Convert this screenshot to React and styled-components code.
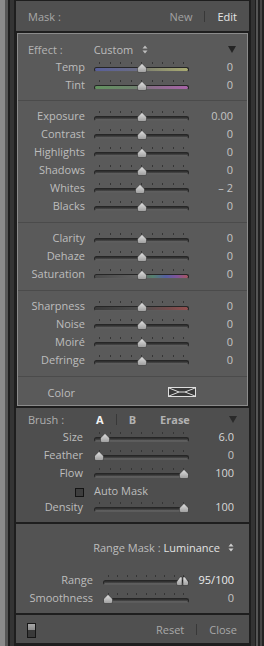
import React from "react";
import styled, { createGlobalStyle } from "styled-components";

const GlobalStyle = createGlobalStyle`
  html, body { margin: 0; padding: 0; background: #1e1e1e; }
  body {
    font-family: "Open Sans", "DejaVu Sans", sans-serif;
    font-size: 11px;
    -webkit-font-smoothing: antialiased;
  }
  * { box-sizing: border-box; }
`;

// track fills: plain groove or colour ramps
const fills = {
  plain: "linear-gradient(#2a2a2a, #3d3d3d 45%, #6c6c6c)",
  temp: "linear-gradient(to right, #585f9a, #6a6c84 45%, #85876f 60%, #a9ab72)",
  tint: "linear-gradient(to right, #62925f, #6f806e 45%, #876e87 60%, #a863a8)",
  sat: "linear-gradient(to right, #4a4a4a, #636363 50%, #55806e 62%, #5560a0 76%, #80549a 88%, #a85660)",
  sharp: "linear-gradient(to right, #3a3a3a, #4e4e4e 50%, #744c4c 80%, #935050)",
};

const Frame = styled.div`
  width: 264px;
  height: 646px;
  display: flex;
  padding: 1px 15px 3px 16px;
  background: #1e1e1e;
  box-shadow: inset 5px 0 #8a8a8a, inset 8px 0 #565656, inset 10px 0 #1e1e1e,
    inset 14px 0 #343434, inset -2px 0 #222, inset -4px 0 #464646,
    inset -6px 0 #222, inset -8px 0 #555, inset -9px 0 #1e1e1e,
    inset -13px 0 #333;
`;

const Column = styled.div`
  flex: 1;
  display: flex;
  flex-direction: column;
  gap: 2px;
`;

const Header = styled.div`
  height: 30px;
  display: flex;
  align-items: center;
  padding: 0 12px;
  background: #505050;
  color: #a8a8a8;
`;

const Spacer = styled.div`
  flex: 1;
`;

const Divider = styled.span`
  width: 1px;
  height: ${(p) => p.$h || 11}px;
  margin: 0 ${(p) => p.$m || 12}px;
  background: #383838;
`;

const Word = styled.span`
  color: ${(p) => p.$color || "#a8a8a8"};
  font-weight: ${(p) => (p.$bold ? 700 : 400)};
  white-space: nowrap;
`;

const Box = styled.div`
  margin: 0 1px;
  border: 1px solid #8b8b8b;
  background: #5a5a5a;
`;

const Group = styled.div`
  padding: 6px 0 7px;
  & + & {
    border-top: 1px solid #4b4b4b;
  }
  &:first-child {
    padding-bottom: 6px;
  }
  &:last-child {
    padding-bottom: 4px;
  }
`;

const Row = styled.div`
  display: grid;
  grid-template-columns: ${(p) => p.$label}px ${(p) => p.$track}px 1fr;
  align-items: center;
  height: ${(p) => p.$h || 18}px;
  padding-right: ${(p) => p.$right}px;
`;

const Label = styled.div`
  text-align: ${(p) => (p.$left ? "left" : "right")};
  padding: ${(p) => (p.$left ? "0" : `0 ${p.$pad}px 0 0`)};
  color: ${(p) => p.$color || "#bdbdbd"};
  white-space: nowrap;
  line-height: 18px;
`;

const Value = styled.div`
  text-align: right;
  color: ${(p) => p.$color || "#c4c4c4"};
  line-height: 18px;
`;

const SliderBox = styled.div`
  position: relative;
  height: 18px;
  display: flex;
  flex-direction: column;
  padding-top: 4px;
`;

const Ticks = styled.div`
  height: 2px;
  display: flex;
  justify-content: space-between;
  padding: 0 5px;
`;

const Tick = styled.span`
  width: 1px;
  height: 2px;
  background: #353535;
`;

const Track = styled.div`
  margin-top: 3px;
  height: 5px;
  border-radius: 3px;
  border: 1px solid #262626;
  border-bottom-color: #5c5c5c;
  background: ${(p) => fills[p.$fill || "plain"]};
`;

const ThumbWrap = styled.div`
  position: absolute;
  top: 5px;
  width: ${(p) => (p.$double ? 13 : 10)}px;
  height: 10px;
  display: flex;
`;

const Thumb = () => (
  <svg width="10" height="10" viewBox="0 0 10 10">
    <defs>
      <linearGradient id="thumbFill" x1="0" y1="0" x2="0" y2="1">
        <stop offset="0" stopColor="#e2e2e2" />
        <stop offset="1" stopColor="#9c9c9c" />
      </linearGradient>
    </defs>
    <path
      d="M5 0.5 L9.5 5 L9.5 8 Q9.5 9.5 8 9.5 L2 9.5 Q0.5 9.5 0.5 8 L0.5 5 Z"
      fill="url(#thumbFill)"
      stroke="rgba(30,30,30,0.55)"
      strokeWidth="0.8"
    />
  </svg>
);

const DoubleThumb = () => (
  <svg width="13" height="10" viewBox="0 0 13 10">
    <path
      d="M0.5 6 L4 1 L6 1 L6 9.5 L2 9.5 Q0.5 9.5 0.5 8 Z"
      fill="url(#thumbFill)"
      stroke="rgba(30,30,30,0.6)"
      strokeWidth="0.8"
    />
    <path
      d="M12.5 6 L9 1 L7 1 L7 9.5 L11 9.5 Q12.5 9.5 12.5 8 Z"
      fill="url(#thumbFill)"
      stroke="rgba(30,30,30,0.6)"
      strokeWidth="0.8"
    />
  </svg>
);

const Slider = ({ at, fill, double }) => (
  <SliderBox>
    <Ticks>
      {Array.from({ length: 9 }, (_, i) => (
        <Tick key={i} />
      ))}
    </Ticks>
    <Track $fill={fill} />
    <ThumbWrap
      $double={double}
      style={{
        left: double ? "calc(100% - 13px)" : `calc(${at} * (100% - 10px))`,
      }}
    >
      {double ? <DoubleThumb /> : <Thumb />}
    </ThumbWrap>
  </SliderBox>
);

const UpDown = ({ color = "#bdbdbd" }) => (
  <svg width="6" height="9" viewBox="0 0 6 9">
    <path d="M3 0.5 L5.5 3.5 L0.5 3.5 Z M3 8.5 L5.5 5.5 L0.5 5.5 Z" fill={color} />
  </svg>
);

const DownTri = ({ color = "#242424" }) => (
  <svg width="8" height="7" viewBox="0 0 8 7">
    <path d="M0 0 L8 0 L4 7 Z" fill={color} />
  </svg>
);

const EffectRow = styled.div`
  display: flex;
  align-items: center;
  height: 18px;
  padding: 0 11px 0 10px;
  color: #b4b4b4;
`;

const EffectName = styled.span`
  margin-left: 31px;
  margin-right: 9px;
  color: #bcbcbc;
`;

const ColorRow = styled.div`
  display: flex;
  align-items: center;
  height: 18px;
`;

const ColorLabel = styled.span`
  width: 57px;
  text-align: right;
  color: #bdbdbd;
`;

const Swatch = styled.svg`
  margin-left: 93px;
`;

const Section = styled.div`
  background: ${(p) => p.$bg};
  padding: ${(p) => p.$pad};
  height: ${(p) => p.$h}px;
`;

const BrushHead = styled.div`
  display: flex;
  align-items: center;
  height: 18px;
  padding: 0 12px;
  color: #aeaeae;
`;

const BrushA = styled.span`
  margin-left: 32px;
  font-weight: 700;
  color: #f2f2f2;
`;

const BrushOpt = styled.span`
  font-weight: 700;
  color: #b2b2b2;
  margin-left: ${(p) => p.$ml || 0}px;
`;

const Check = styled.span`
  display: inline-block;
  width: 9px;
  height: 9px;
  border: 1px solid #141414;
  background: #3e3e3e;
  vertical-align: middle;
`;

const RangeHead = styled.div`
  display: flex;
  align-items: center;
  justify-content: flex-end;
  gap: 8px;
  height: 18px;
  padding-right: 15px;
  margin-bottom: 15px;
`;

const Bar = styled.div`
  height: 28px;
  display: flex;
  align-items: center;
  padding: 0 12px 0 11px;
  background: #505050;
  color: #a8a8a8;
`;

const Switch = styled.span`
  width: 9px;
  height: 15px;
  border: 1px solid #161616;
  background: linear-gradient(#a8a8a8 0, #8a8a8a 45%, #3a3a3a 50%, #3a3a3a);
  margin-top: 2px;
`;

const boxRow = { $label: 76, $track: 95, $right: 14 };
const brushRow = { $label: 78, $track: 95, $right: 15 };
const rangeRow = { $label: 87, $track: 86, $right: 15 };

const tone = [
  ["Exposure", "0.00", 0.505],
  ["Contrast", "0", 0.505],
  ["Highlights", "0", 0.505],
  ["Shadows", "0", 0.505],
  ["Whites", "\u2013 2", 0.485],
  ["Blacks", "0", 0.505],
];

const presence = [
  ["Clarity", "0", 0.505, "plain"],
  ["Dehaze", "0", 0.505, "plain"],
  ["Saturation", "0", 0.505, "sat"],
];

const detail = [
  ["Sharpness", "0", 0.505, "sharp"],
  ["Noise", "0", 0.505, "plain"],
  ["Moir\u00e9", "0", 0.505, "plain"],
  ["Defringe", "0", 0.505, "plain"],
];

const BoxSlider = ({ label, value, at, fill }) => (
  <Row {...boxRow}>
    <Label $pad={9}>{label}</Label>
    <Slider at={at} fill={fill} />
    <Value>{value}</Value>
  </Row>
);

const App = () => (
  <>
    <GlobalStyle />
    <Frame>
      <Column>
        <Header>
          <Word>Mask :</Word>
          <Spacer />
          <Word $color="#a2a2a2">New</Word>
          <Divider />
          <Word $color="#e6e6e6">Edit</Word>
        </Header>

        <Box>
          <Group>
            <EffectRow>
              <span>Effect :</span>
              <EffectName>Custom</EffectName>
              <UpDown />
              <Spacer />
              <DownTri />
            </EffectRow>
            <BoxSlider label="Temp" value="0" at={0.505} fill="temp" />
            <BoxSlider label="Tint" value="0" at={0.505} fill="tint" />
          </Group>
          <Group>
            {tone.map(([l, v, a]) => (
              <BoxSlider key={l} label={l} value={v} at={a} />
            ))}
          </Group>
          <Group>
            {presence.map(([l, v, a, f]) => (
              <BoxSlider key={l} label={l} value={v} at={a} fill={f} />
            ))}
          </Group>
          <Group>
            {detail.map(([l, v, a, f]) => (
              <BoxSlider key={l} label={l} value={v} at={a} fill={f} />
            ))}
          </Group>
          <Group>
            <ColorRow>
              <ColorLabel>Color</ColorLabel>
              <Swatch width="28" height="10" viewBox="0 0 28 10">
                <rect x="0.5" y="0.5" width="27" height="9" fill="#3a3a3a" stroke="#dedede" />
                <path
                  d="M1 1 L11 5 L17 5 L27 1 M1 9 L11 5 M17 5 L27 9"
                  stroke="#dedede"
                  strokeWidth="1"
                  fill="none"
                />
              </Swatch>
            </ColorRow>
          </Group>
        </Box>

        <Section $bg="#4e4e4e" $pad="2px 0 0" $h={114}>
          <BrushHead>
            <span>Brush :</span>
            <BrushA>A</BrushA>
            <Divider $m={12} />
            <BrushOpt>B</BrushOpt>
            <BrushOpt $ml={24}>Erase</BrushOpt>
            <Spacer />
            <DownTri color="#2a2a2a" />
          </BrushHead>
          <Row {...brushRow}>
            <Label $pad={11}>Size</Label>
            <Slider at={0.07} />
            <Value $color="#d6d6d6">6.0</Value>
          </Row>
          <Row {...brushRow}>
            <Label $pad={11}>Feather</Label>
            <Slider at={0} />
            <Value>0</Value>
          </Row>
          <Row {...brushRow}>
            <Label $pad={11}>Flow</Label>
            <Slider at={1} />
            <Value $color="#d6d6d6">100</Value>
          </Row>
          <Row {...brushRow} $h={16}>
            <Label $pad={10}>
              <Check />
            </Label>
            <Label $left>Auto Mask</Label>
          </Row>
          <Row {...brushRow}>
            <Label $pad={11}>Density</Label>
            <Slider at={1} />
            <Value $color="#d6d6d6">100</Value>
          </Row>
        </Section>

        <Section $bg="#535353" $pad="14px 0 0" $h={89}>
          <RangeHead>
            <span>
              <Word $color="#bdbdbd">Range Mask : </Word>
              <Word $color="#e2e2e2">Luminance</Word>
            </span>
            <UpDown color="#cfcfcf" />
          </RangeHead>
          <Row {...rangeRow}>
            <Label $pad={10}>Range</Label>
            <Slider double />
            <Value $color="#ececec">95/100</Value>
          </Row>
          <Row {...rangeRow}>
            <Label $pad={10}>Smoothness</Label>
            <Slider at={0} />
            <Value>0</Value>
          </Row>
        </Section>

        <Bar>
          <Switch />
          <Spacer />
          <span>Reset</span>
          <Divider $m={12} />
          <span>Close</span>
        </Bar>
      </Column>
    </Frame>
  </>
);

export default App;
